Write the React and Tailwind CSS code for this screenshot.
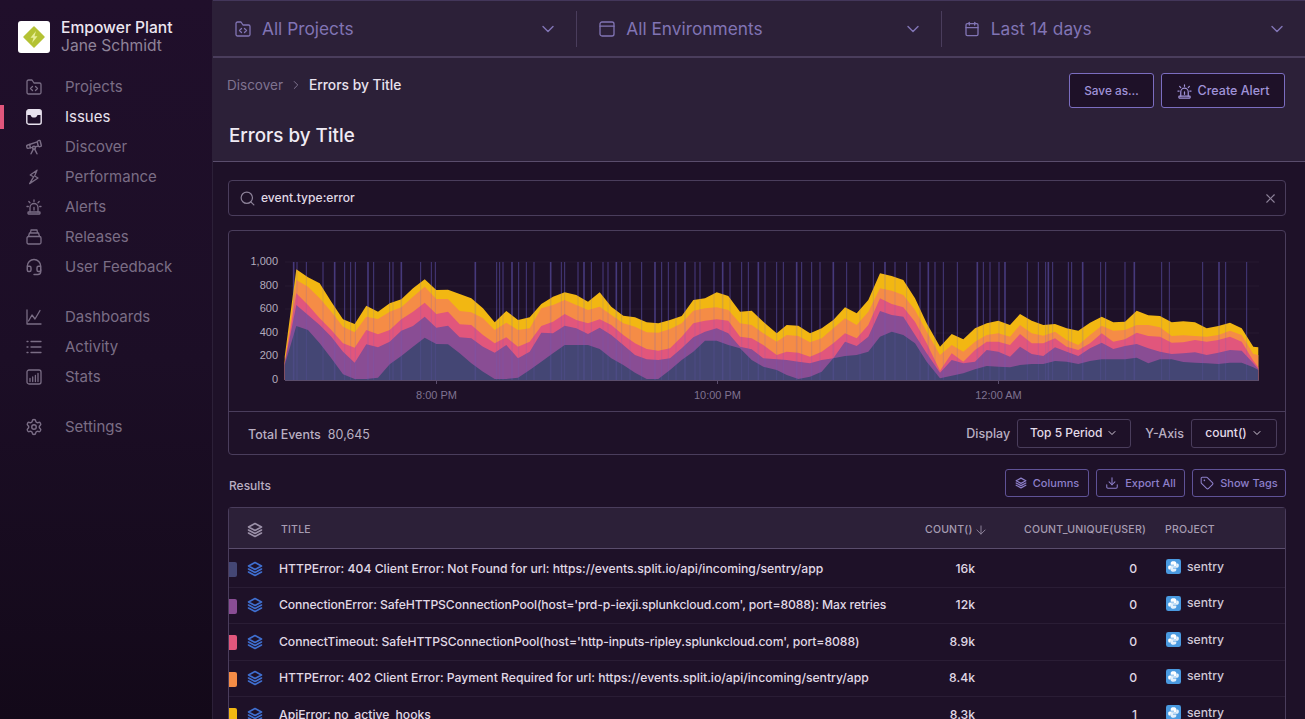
import { Telescope, Headset, Settings, Calendar, Search, X, ChevronDown, ChevronRight, Download, Tag, ArrowDown } from "lucide-react";

// x, then the tops of the yellow, orange, pink, purple and blue bands, read off the chart at 3x
const bands = [
  [170, 380, 395, 400, 400, 405], [205, 118, 150, 190, 225, 288], [240, 142, 170, 225, 255, 300], [275, 160, 205, 265, 285, 340],
  [310, 215, 245, 300, 320, 385], [345, 268, 290, 340, 365, 433], [380, 282, 307, 353, 398, 447], [415, 227, 260, 300, 343, 447],
  [450, 245, 267, 313, 352, 443], [485, 220, 245, 300, 335, 403], [520, 208, 232, 268, 302, 378], [555, 175, 200, 245, 288, 350],
  [590, 148, 170, 218, 260, 323], [625, 180, 207, 252, 293, 342], [660, 179, 207, 245, 287, 343], [695, 192, 243, 283, 322, 370],
  [730, 205, 247, 285, 325, 400], [765, 235, 265, 315, 350, 425], [800, 277, 300, 340, 368, 447], [835, 243, 278, 322, 345, 447],
  [870, 270, 300, 350, 385, 443], [905, 262, 295, 335, 365, 420], [940, 222, 235, 288, 308, 395], [975, 200, 225, 275, 310, 370],
  [1010, 187, 210, 252, 287, 345], [1045, 195, 225, 270, 295, 345], [1080, 215, 240, 280, 312, 345], [1115, 187, 230, 268, 293, 357],
  [1150, 230, 255, 285, 315, 385], [1186, 257, 280, 315, 345, 405], [1221, 262, 290, 340, 375, 428], [1256, 277, 307, 357, 388, 447],
  [1291, 280, 308, 362, 390, 447], [1326, 270, 297, 355, 385, 420], [1361, 258, 280, 320, 355, 390], [1396, 210, 242, 280, 322, 365],
  [1431, 205, 235, 272, 305, 332], [1466, 187, 232, 268, 295, 332], [1501, 198, 240, 272, 310, 345], [1536, 245, 280, 320, 350, 355],
  [1571, 242, 285, 325, 358, 390], [1606, 275, 310, 345, 385, 410], [1646, 310, 335, 375, 388, 420], [1676, 285, 315, 365, 390, 435],
  [1711, 287, 318, 368, 395, 447], [1746, 310, 337, 380, 400, 440], [1781, 295, 325, 365, 390, 425], [1816, 270, 295, 340, 385, 385],
  [1851, 232, 265, 310, 335, 378], [1886, 250, 285, 325, 348, 375], [1921, 210, 245, 285, 320, 365], [1956, 130, 175, 205, 243, 320],
  [1991, 138, 182, 222, 255, 305], [2026, 150, 195, 232, 260, 315], [2061, 205, 240, 275, 315, 340], [2096, 280, 305, 340, 370, 395],
  [2136, 350, 375, 422, 428, 445], [2171, 312, 345, 370, 390, 437], [2206, 328, 365, 395, 400, 430], [2241, 295, 335, 360, 395, 418],
  [2276, 280, 315, 335, 360, 408], [2311, 272, 310, 335, 365, 410], [2346, 285, 320, 345, 380, 412], [2376, 252, 285, 312, 350, 405],
  [2411, 272, 310, 340, 372, 402], [2446, 285, 317, 340, 378, 402], [2481, 282, 305, 325, 352, 393], [2516, 295, 330, 350, 365, 395],
  [2551, 302, 345, 360, 378, 402], [2586, 278, 315, 340, 355, 393], [2621, 260, 287, 310, 338, 388], [2656, 277, 302, 335, 357, 388],
  [2691, 275, 300, 328, 348, 388], [2726, 242, 285, 308, 342, 383], [2761, 256, 285, 318, 355, 400], [2796, 258, 292, 320, 365, 388],
  [2831, 277, 318, 338, 372, 388], [2866, 274, 316, 337, 370, 396], [2901, 277, 318, 330, 367, 398], [2936, 295, 320, 335, 375, 400],
  [2971, 288, 315, 330, 368, 402], [3006, 278, 302, 320, 360, 398], [3041, 295, 315, 335, 362, 398], [3076, 350, 372, 392, 400, 412],
  [3091, 352, 375, 412, 418, 420],
];

const bandColors = ["#f2b712", "#f58c46", "#e1567c", "#894d94", "#444674"];

// release markers, same 3x coordinates
const releases = [
  197, 207, 235, 285, 320, 350, 368, 382, 420, 437, 485, 495, 520, 578, 610, 622, 742, 806, 815, 825, 852, 872, 895, 918, 968, 1000, 1010, 1050, 1068, 1090, 1125, 1140, 1165,
  1181, 1206, 1241, 1281, 1301, 1321, 1344, 1371, 1401, 1416, 1458, 1484, 1506, 1541, 1561, 1591, 1611, 1646, 1666, 1706, 1721, 1751, 1776, 1816, 1856, 1896, 1936, 1971, 2001, 2036, 2076, 2101, 2121,
  2146, 2188, 2248, 2266, 2286, 2313, 2331, 2398, 2431, 2453, 2461, 2474, 2521, 2531, 2564, 2618, 2633, 2691, 2719, 2801, 2824, 2924, 2973, 2993, 3056,
];

const px = (x) => x / 3 - 1;
const py = (y) => y / 3 - 1;

const ReleaseLines = ({ opacity }) =>
  releases.map((x, i) => (
    <line key={i} x1={px(x)} x2={px(x)} y1="31" y2="149" stroke="#6c5fc7" strokeOpacity={opacity} strokeWidth={i % 4 === 0 ? 1.6 : 1} />
  ));

const Chart = () => (
  <svg viewBox="0 0 1056 180" className="block w-full h-[180px]">
    {[262, 286, 309, 333, 356].map((y) => (
      <line key={y} x1="56" x2="1030" y1={y - 231} y2={y - 231} stroke="#261a31" strokeWidth="1" />
    ))}
    <ReleaseLines opacity={0.4} />
    {bandColors.map((color, i) => (
      <polygon
        key={color}
        fill={color}
        points={
          bands.map((row) => `${px(row[0]).toFixed(1)},${py(row[i + 1]).toFixed(1)}`).join(" ") +
          ` ${px(3091).toFixed(1)},149 ${px(170).toFixed(1)},149`
        }
      />
    ))}
    <ReleaseLines opacity={0.2} />
    <line x1="56" x2="1030" y1="149.5" y2="149.5" stroke="#5a4d6c" />
    {[["1,000", 31], ["800", 55], ["600", 78], ["400", 102], ["200", 125], ["0", 149]].map(([label, y]) => (
      <text key={label} x="49" y={y + 3} textAnchor="end" fontSize="11" fontFamily="Liberation Sans, sans-serif" fill="#b3abbd">{label}</text>
    ))}
    {[["8:00 PM", 207.5], ["10:00 PM", 488.5], ["12:00 AM", 769.5]].map(([label, x]) => (
      <g key={label}>
        <line x1={x} x2={x} y1="149" y2="153" stroke="#5a4d6c" />
        <text x={x} y="168" textAnchor="middle" fontSize="11" fontFamily="Liberation Sans, sans-serif" fill="#7f7390">{label}</text>
      </g>
    ))}
  </svg>
);

const Svg16 = ({ children, className }) => (
  <svg viewBox="0 0 16 16" fill="none" stroke="currentColor" strokeWidth="1.3" strokeLinecap="round" strokeLinejoin="round" className={className}>
    {children}
  </svg>
);

const FolderIcon = ({ className }) => (
  <Svg16 className={className}>
    <path d="M1 2.500A1.500 1.500 0 0 1 2.500 1H6l2 3h5.500A1.500 1.500 0 0 1 15 5.500v8a1.500 1.500 0 0 1-1.500 1.500h-11A1.500 1.500 0 0 1 1 13.500z" />
    <path d="M6.500 7.500 4.500 9.500l2 2M9.500 7.500l2 2-2 2" />
  </Svg16>
);

const WindowIcon = ({ className }) => (
  <Svg16 className={className}>
    <rect x="1" y="1" width="14" height="14" rx="2" />
    <path d="M1 5.200h14" />
  </Svg16>
);

const SirenIcon = ({ className }) => (
  <Svg16 className={className}>
    <path d="M4 13V8.500a4 4 0 0 1 8 0V13M8 8.500V11" />
    <rect x="2" y="13" width="12" height="2" rx="0.500" />
    <path d="M8 1v1.500M2.800 2.500 4 3.800M13.200 2.500 12 3.800M1 7.500h1.300M13.700 7.500H15" />
  </Svg16>
);

const IssuesIcon = ({ className }) => (
  <svg viewBox="0 0 16 16" className={className}>
    <rect x="0.800" y="0.800" width="14.400" height="14.400" rx="2" fill="none" stroke="currentColor" strokeWidth="1.400" />
    <path d="M1 6h3.500c.4 1.600 1.800 2.600 3.500 2.600s3.100-1 3.500-2.600H15V2.500A1.500 1.500 0 0 0 13.500 1h-11A1.500 1.500 0 0 0 1 2.500z" fill="currentColor" />
  </svg>
);

const BoltIcon = ({ className }) => (
  <Svg16 className={className}>
    <path d="M11 1.200 4.200 6l3.400 1.800-4 6.800 8.400-5.600-3.400-2z" />
  </Svg16>
);

const ReleasesIcon = ({ className }) => (
  <Svg16 className={className}>
    <rect x="1" y="7.500" width="14" height="7.500" rx="1.500" />
    <path d="M2.500 7.500 3.500 4h9l1 3.500M4.500 4l.5-3h6l.5 3" />
  </Svg16>
);

const DashIcon = ({ className }) => (
  <Svg16 className={className}>
    <path d="M1 1v14h14M2.500 12 6 6l3 4 5-8.500" />
  </Svg16>
);

const ListIcon = ({ className }) => (
  <Svg16 className={className}>
    <path d="M5 2.500h10M5 8h10M5 13.500h10M1 2.500h1M1 8h1M1 13.500h1" />
  </Svg16>
);

const StatsIcon = ({ className }) => (
  <Svg16 className={className}>
    <rect x="1" y="1" width="14" height="14" rx="2" />
    <path d="M4 12.500v-3M6.700 12.500V8M9.400 12.500V6.500M12 12.500V4.500" />
  </Svg16>
);

const StackIcon = ({ className }) => (
  <svg viewBox="0 0 16 16" fill="none" stroke="currentColor" strokeWidth="1.600" strokeLinecap="round" strokeLinejoin="round" className={className}>
    <path d="M8 1.500 14.500 5 8 8.500 1.500 5z" />
    <path d="M1.500 8 8 11.500 14.500 8M1.500 11 8 14.500 14.500 11" />
  </svg>
);

const ProjectIcon = () => (
  <svg viewBox="0 0 16 16" className="w-[15px] h-[15px] shrink-0">
    <rect width="16" height="16" rx="2.500" fill="#4a9ae0" />
    <path d="M8 2.500c-2 0-3 .7-3 2V6h3.500v.8H3.800C2.800 6.800 2.300 7.700 2.300 9s.5 2.200 1.500 2.200H5V9.600c0-1 .8-1.700 1.800-1.700h2.700c.9 0 1.500-.6 1.500-1.500v-2c0-1.200-1.200-1.900-3-1.900z" fill="#fff" />
    <path d="M8 13.500c2 0 3-.7 3-2V10H7.500v-.8h4.700c1 0 1.500-.9 1.500-2.200s-.5-2.200-1.500-2.200H11v1.600c0 1-.8 1.700-1.800 1.700H6.500C5.600 8.100 5 8.700 5 9.600v2c0 1.200 1.200 1.900 3 1.900z" fill="#fff" opacity="0.85" />
  </svg>
);

const Logo = () => (
  <div className="w-8 h-8 rounded-[3px] bg-white flex items-center justify-center shrink-0">
    <svg viewBox="0 0 24 24" className="w-6 h-6">
      <path d="M12 2 22 12 12 22 2 12z" fill="#b4c234" stroke="#b4c234" strokeWidth="1.500" strokeLinejoin="round" />
      <path d="M14 6 8.500 12.800h3L10 18l5.500-6.800h-3z" fill="#e8ee9a" />
    </svg>
  </div>
);

const navGroups = [
  [
    { label: "Projects", Icon: FolderIcon },
    { label: "Issues", Icon: IssuesIcon, active: true },
    { label: "Discover", Icon: Telescope, lucide: true },
    { label: "Performance", Icon: BoltIcon },
    { label: "Alerts", Icon: SirenIcon },
    { label: "Releases", Icon: ReleasesIcon },
    { label: "User Feedback", Icon: Headset, lucide: true },
  ],
  [
    { label: "Dashboards", Icon: DashIcon },
    { label: "Activity", Icon: ListIcon },
    { label: "Stats", Icon: StatsIcon },
  ],
  [{ label: "Settings", Icon: Settings, lucide: true }],
];

const rows = [
  { color: "bg-[#444674]", title: "HTTPError: 404 Client Error: Not Found for url: https://events.split.io/api/incoming/sentry/app", count: "16k", users: "0" },
  { color: "bg-[#894d94]", tracking: "tracking-[-0.11px]", title: "ConnectionError: SafeHTTPSConnectionPool(host='prd-p-iexji.splunkcloud.com', port=8088): Max retries", count: "12k", users: "0" },
  { color: "bg-[#e1567c]", tracking: "tracking-[-0.075px]", title: "ConnectTimeout: SafeHTTPSConnectionPool(host='http-inputs-ripley.splunkcloud.com', port=8088)", count: "8.9k", users: "0" },
  { color: "bg-[#f58c46]", title: "HTTPError: 402 Client Error: Payment Required for url: https://events.split.io/api/incoming/sentry/app", count: "8.4k", users: "0" },
  { color: "bg-[#f2b712]", title: "ApiError: no_active_hooks", count: "8.3k", users: "1" },
];

const Sidebar = () => (
  <aside className="w-[213px] shrink-0 h-full bg-linear-to-b from-[#200f2b] via-[#1c0e26] to-[#130919] border-r border-[#2c2038]">
    <div className="flex items-center gap-[11px] pl-[18px] pt-[21px] h-[72px] pb-[19px]">
      <Logo />
      <div className="leading-[18px] whitespace-nowrap">
        <div className="text-[15.6px] font-medium text-[#ece6f0]">Empower Plant</div>
        <div className="text-[15.6px] text-[#8f8399]">Jane Schmidt</div>
      </div>
    </div>
    <nav className="flex flex-col gap-[20px]">
      {navGroups.map((group, g) => (
        <div key={g} className="flex flex-col">
          {group.map(({ label, Icon, active, lucide }) => (
            <div key={label} className={`relative h-[30px] flex items-center pl-[26px] gap-[23px] ${active ? "text-[#e8e2ee]" : "text-[#7a6d85]"}`}>
              {active && <span className="absolute left-0 top-[3px] w-1 h-[24px] bg-[#e1567c]" />}
              {lucide ? (
                <Icon className="w-[18px] h-[18px] -mx-[1px] shrink-0" strokeWidth={1.9} />
              ) : (
                <Icon className="w-4 h-4 shrink-0" />
              )}
              <span className="text-[15px]">{label}</span>
            </div>
          ))}
        </div>
      ))}
    </nav>
  </aside>
);

const TopFilter = ({ Icon, label, last }) => (
  <div className={`flex-1 flex items-center h-[36px] pl-[22px] pr-[18px] gap-[11px] text-[#8174b4] ${last ? "" : "border-r border-[#4a3d5c]"}`}>
    <Icon className="w-4 h-4 shrink-0" />
    <span className="flex-1 text-[17.3px]">{label}</span>
    <ChevronDown className="w-5 h-5" strokeWidth={1.7} />
  </div>
);

const OutlineButton = ({ children, className = "" }) => (
  <button className={`flex items-center justify-center gap-[6px] rounded-[3px] border border-[#7b6dc0] bg-[#1e1128] text-[#a093d8] font-medium ${className}`}>
    {children}
  </button>
);

const Select = ({ label, className }) => (
  <button className={`h-[29px] flex items-center justify-center gap-1 rounded-[3px] border border-[#4a3d5c] text-[12px] font-medium text-[#e4dcea] ${className}`}>
    {label}
    <ChevronDown className="w-3 h-3" strokeWidth={1.8} />
  </button>
);

const ResultsTable = () => (
  <div className="rounded-t-[4px] border border-b-0 border-[#4a3d5c]">
    <div className="h-[41px] pt-[3px] grid grid-cols-[52px_644px_99px_141px_1fr] items-center bg-[#2c2038] border-b border-[#5a4d6c] text-[10.5px] font-medium tracking-[0.2px] text-[#a79db3]">
      <StackIcon className="w-4 h-4 ml-[18px] text-[#9b90a8]" />
      <span>TITLE</span>
      <span className="flex items-center">COUNT()<ArrowDown className="w-[14px] h-[14px] ml-[2px] text-[#8d8299]" strokeWidth={1.7} /></span>
      <span>COUNT_UNIQUE(USER)</span>
      <span>PROJECT</span>
    </div>
    <div className="pt-[2px]">
      {rows.map((row) => (
        <div key={row.title} className="relative h-[36.5px] grid grid-cols-[50px_658px_38px_162px_29px_1fr] items-center border-b border-[#2a1d35] text-[12.2px] font-medium text-[#e0d9e6]">
          <span className={`absolute left-0 top-[11px] w-2 h-[15px] rounded-r-[2px] ${row.color}`} />
          <StackIcon className="w-4 h-4 ml-[18px] text-[#3f6fd0]" />
          <span className={`whitespace-nowrap overflow-hidden ${row.tracking || ""}`}>{row.title}</span>
          <span className="text-right">{row.count}</span>
          <span className="text-right">{row.users}</span>
          <span />
          <span className="flex items-center gap-[6px] -mt-[4px] text-[#cfc7d6]"><ProjectIcon />sentry</span>
        </div>
      ))}
    </div>
  </div>
);

const App = () => {
  return (
    <div className="w-[1305px] h-[719px] overflow-hidden flex bg-[#1e1128] font-[family-name:Inter,sans-serif]">
      <Sidebar />
      <main className="flex-1 min-w-0 flex flex-col">
        <header className="h-[58px] shrink-0 flex items-center bg-[#2c2038] border-t border-b-2 border-t-[#43365a] border-b-[#4a3d5c]">
          <TopFilter Icon={FolderIcon} label="All Projects" />
          <TopFilter Icon={WindowIcon} label="All Environments" />
          <TopFilter Icon={Calendar} label="Last 14 days" last />
        </header>

        <section className="h-[104px] shrink-0 bg-[#2c2038] border-b border-[#5a4d6c] pl-[14px] pr-[20px] flex justify-between">
          <div>
            <div className="flex items-center gap-[6px] mt-[17px] text-[13.5px]">
              <span className="text-[#7f7390]">Discover</span>
              <ChevronRight className="w-[14px] h-[14px] text-[#7f7390]" strokeWidth={1.7} />
              <span className="font-medium text-[13.8px] text-[#e8e2ee]">Errors by Title</span>
            </div>
            <h1 className="mt-[26px] ml-[2px] text-[18.8px] font-medium text-[#f0ebf4]">Errors by Title</h1>
          </div>
          <div className="flex gap-[7px] mt-[15px] text-[12.5px]">
            <OutlineButton className="w-[85px] h-[35px] pt-[2px] text-[11.8px]">Save as…</OutlineButton>
            <OutlineButton className="w-[124px] h-[35px] pt-[2px]"><SirenIcon className="w-[15px] h-[15px]" />Create Alert</OutlineButton>
          </div>
        </section>

        <div className="flex-1 min-h-0 pl-[15px] pr-[19px] pt-[18px]">
          <div className="h-[36px] flex items-center rounded-[4px] border border-[#4a3d5c] pl-[10px] pr-[7px] text-[12.1px] font-medium text-[#e0d9e6]">
            <Search className="w-[17px] h-[17px] text-[#8d8299]" strokeWidth={1.7} />
            <span className="flex-1 ml-[5px]">event.type:error</span>
            <X className="w-[15px] h-[15px] text-[#8d8299]" strokeWidth={1.7} />
          </div>

          <div className="mt-[14px] rounded-[4px] border border-[#4a3d5c]">
            <Chart />
            <div className="h-[43px] border-t border-[#4a3d5c] flex items-center pl-[19px] pr-[8px] text-[12.5px] font-medium text-[#b9afc2]">
              <span className="mt-[4px]">Total Events</span>
              <span className="mt-[4px] ml-[7px] font-normal">80,645</span>
              <span className="mt-[2px] ml-auto mr-[7px]">Display</span>
              <Select label="Top 5 Period" className="w-[114px]" />
              <span className="mt-[2px] ml-[14px] mr-[7px]">Y-Axis</span>
              <Select label="count()" className="w-[86px]" />
            </div>
          </div>

          <div className="mt-[14px] h-[28px] flex items-center justify-between text-[12px] font-medium">
            <span className="text-[#b9afc2] ml-[1px] mt-[6px]">Results</span>
            <div className="flex gap-[7px] text-[11px]">
              <OutlineButton className="w-[84px] h-[28px] !border-[#5f5296] !bg-transparent !text-[#8d7fca]"><StackIcon className="w-3 h-3" />Columns</OutlineButton>
              <OutlineButton className="w-[89px] h-[28px] !border-[#5f5296] !bg-transparent !text-[#8d7fca]"><Download className="w-[14px] h-[14px]" strokeWidth={1.8} />Export All</OutlineButton>
              <OutlineButton className="w-[94px] h-[28px] !border-[#5f5296] !bg-transparent !text-[#8d7fca]"><Tag className="w-[14px] h-[14px]" strokeWidth={1.8} />Show Tags</OutlineButton>
            </div>
          </div>

          <div className="mt-[10px]">
            <ResultsTable />
          </div>
        </div>
      </main>
    </div>
  );
};

export default App;
